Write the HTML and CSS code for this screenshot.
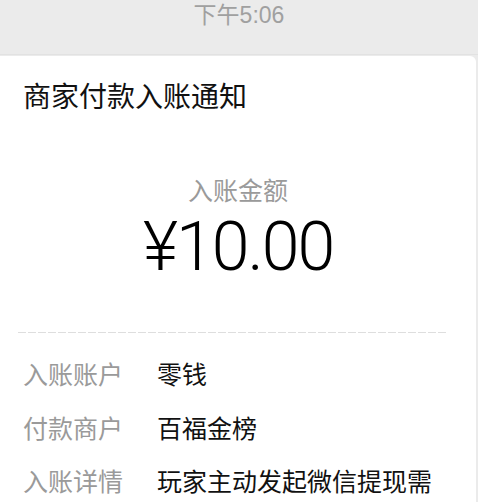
FILE: index.html
```html
<!DOCTYPE html>
<html lang="zh-CN">
<head>
    <meta charset="UTF-8">
    <meta name="viewport" content="width=device-width, initial-scale=1.0">
    <title>商家付款入账通知</title>
    <link rel="stylesheet" href="styles.css">
</head>
<body>
    <div class="time-bar">下午5:06</div>

    <div class="card">
        <h1 class="card-title">商家付款入账通知</h1>

        <div class="amount-block">
            <div class="amount-label">入账金额</div>
            <div class="amount">¥10.00</div>
        </div>

        <div class="divider"></div>

        <div class="rows">
            <div class="row">
                <span class="row-label">入账账户</span>
                <span class="row-value">零钱</span>
            </div>
            <div class="row">
                <span class="row-label">付款商户</span>
                <span class="row-value">百福金榜</span>
            </div>
            <div class="row">
                <span class="row-label">入账详情</span>
                <span class="row-value">玩家主动发起微信提现需</span>
            </div>
        </div>
    </div>
</body>
</html>
```

FILE: styles.css
```css
html, body {
    margin: 0;
    padding: 0;
}

body {
    background: #ebebeb;
    font-family: "Liberation Sans", "Noto Sans CJK SC", sans-serif;
    color: #111;
    overflow: hidden;
}

.time-bar {
    height: 55px;
    border-bottom: 1px solid #e2e2e2;
    box-sizing: border-box;
    line-height: 30px;
    text-align: center;
    font-size: 23px;
    color: #a0a0a0;
}

.card {
    background: #fff;
    margin: 1px 2px 0 0;
    border-top-right-radius: 6px;
    height: 460px;
}

.card-title {
    margin: 0;
    padding: 22px 0 0 23px;
    line-height: 40px;
    font-size: 28px;
    font-weight: normal;
    color: #111;
}

.amount-block {
    margin-top: 56px;
    text-align: center;
}

.amount-label {
    line-height: 34px;
    font-size: 25px;
    color: #9a9a9a;
}

.amount {
    margin-top: 4px;
    line-height: 70px;
    font-family: Roboto, "Liberation Sans", sans-serif;
    font-weight: 300;
    font-size: 68px;
    letter-spacing: -2px;
    color: #000;
}

.divider {
    margin: 50px 30px 0 18px;
    height: 1px;
    background: repeating-linear-gradient(to right, #dedede 0 8px, transparent 8px 10px);
}

.rows {
    padding: 22px 0 0 23px;
}

.row {
    display: flex;
    height: 53.5px;
    line-height: 40px;
    font-size: 25px;
}

.row-label {
    width: 134px;
    color: #9a9a9a;
}

.row-value {
    color: #111;
    white-space: nowrap;
}
```
